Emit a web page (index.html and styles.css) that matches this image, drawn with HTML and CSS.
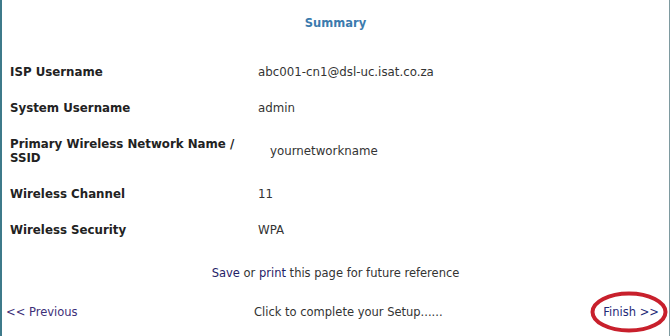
FILE: index.html
```html
<!DOCTYPE html>
<html>
<head>
<meta charset="utf-8">
<link rel="stylesheet" href="styles.css">
</head>
<body>
<div class="panel">
  <div class="title">Summary</div>
  <div class="row"><div class="label">ISP Username</div><div class="value">abc001-cn1@dsl-uc.isat.co.za</div></div>
  <div class="row"><div class="label">System Username</div><div class="value">admin</div></div>
  <div class="row"><div class="label wide">Primary Wireless Network Name /<br>SSID</div><div class="value">yournetworkname</div></div>
  <div class="row"><div class="label">Wireless Channel</div><div class="value">11</div></div>
  <div class="row"><div class="label">Wireless Security</div><div class="value">WPA</div></div>
  <div class="save"><a class="link" href="#">Save</a> or <a class="link" href="#">print</a> this page for future reference</div>
  <div class="nav">
    <a class="prev" href="#">&lt;&lt; Previous</a>
    <span class="hint">Click to complete your Setup......</span>
    <span class="finish-wrap">
      <a class="finish" href="#">Finish &gt;&gt;</a>
      <svg class="circle" width="80" height="44" viewBox="0 0 80 44"><ellipse cx="40" cy="22" rx="36.5" ry="18.5" fill="none" stroke="#c8202c" stroke-width="4"/></svg>
    </span>
  </div>
</div>
</body>
</html>
```
FILE: styles.css
```css
html, body { margin: 0; padding: 0; background: #fff; }
body { font-family: "DejaVu Sans", Verdana, sans-serif; font-size: 11.5px; color: #333; }
.panel {
  box-sizing: border-box;
  width: 670px;
  height: 336px;
  border-left: 2px solid #3e7a8a;
  border-right: 1px solid #7e9aa0;
  overflow: hidden;
}
.title {
  text-align: center;
  font-weight: bold;
  font-size: 11.5px;
  line-height: 14px;
  color: #3b7bae;
  padding: 16px 0 24px;
}
.row { display: flex; padding: 11px 0; line-height: 14px; font-size: 11.8px; }
.label { width: 248px; padding-left: 8px; font-weight: bold; color: #222; }
.label.wide { width: 260px; display: flex; align-items: center; }
.row:nth-child(4) .value { align-self: center; }
.value { color: #333; }
.save { text-align: center; line-height: 14px; padding: 18px 0 11px; color: #333; }
.link { color: #1f2268; text-decoration: none; }
.nav {
  display: grid;
  grid-template-columns: 252px 1fr auto;
  line-height: 14px;
  padding-top: 14px;
}
.prev { color: #3d2f78; text-decoration: none; padding-left: 4px; }
.hint { color: #333; }
.finish-wrap { position: relative; padding-right: 10px; }
.finish { color: #1f2a78; text-decoration: none; }
.circle { position: absolute; right: 0; top: -15px; pointer-events: none; }
```
